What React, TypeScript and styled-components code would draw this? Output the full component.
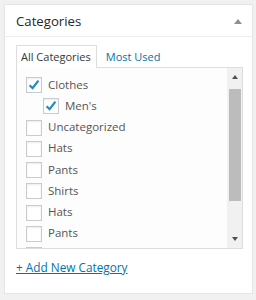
import React from "react";
import styled, { createGlobalStyle } from "styled-components";

const Global = createGlobalStyle`
  html, body { margin: 0; padding: 0; background: #f1f1f1; }
  body { font-family: "Open Sans", "Noto Sans", sans-serif; }
`;

const Panel = styled.div`
  box-sizing: border-box;
  margin: 4px 3px 0 4px;
  width: 249px;
  height: 290px;
  background: #fff;
  border: 1px solid #e5e5e5;
  box-shadow: 0 1px 1px rgba(0, 0, 0, 0.04);
  display: flex;
  flex-direction: column;
`;

const Header = styled.div`
  height: 31px;
  border-bottom: 1px solid #eee;
  display: flex;
  align-items: center;
  justify-content: space-between;
  padding: 0 10px 0 11px;
`;

const Title = styled.h2`
  margin: 0;
  font-size: 13.2px;
  font-weight: 400;
  color: #23282d;
  line-height: 20px;
`;

const Toggle = styled.span`
  width: 0;
  height: 0;
  border-left: 4px solid transparent;
  border-right: 4px solid transparent;
  border-bottom: 5px solid #8c9196;
  margin-top: 1px;
`;

const Inside = styled.div`
  padding: 8px 9px 0 11px;
  display: flex;
  flex-direction: column;
`;

const Tabs = styled.div`
  display: flex;
  align-items: flex-end;
  height: 22px;
`;

const Tab = styled.div<{ $active?: boolean }>`
  box-sizing: border-box;
  height: 23px;
  margin-bottom: -1px;
  padding: 0 5px 0 4px;
  margin-right: 4px;
  font-size: 11px;
  line-height: 21px;
  position: relative;
  z-index: 1;
  color: ${(p) => (p.$active ? "#32373c" : "#0073aa")};
  background: ${(p) => (p.$active ? "#fff" : "transparent")};
  border: 1px solid ${(p) => (p.$active ? "#ddd" : "transparent")};
  border-bottom: none;
  white-space: nowrap;
`;

const Box = styled.div`
  box-sizing: border-box;
  height: 182px;
  border: 1px solid #ddd;
  background: #fdfdfd;
  display: flex;
`;

const List = styled.ul`
  flex: 1;
  list-style: none;
  margin: 0;
  padding: 6px 0 0 9px;
  overflow: hidden;
`;

const Children = styled.ul`
  list-style: none;
  margin: 0;
  padding: 0 0 0 17px;
`;

const Row = styled.li`
  height: 21.25px;
  display: flex;
  align-items: center;
  font-size: 11.5px;
  color: #555;
  white-space: nowrap;
`;

const Check = styled.span<{ $on?: boolean }>`
  box-sizing: border-box;
  width: 16px;
  height: 16px;
  flex: none;
  border: 1px solid #c8ccd0;
  background: #fff;
  box-shadow: inset 0 1px 2px rgba(0, 0, 0, 0.08);
  margin: 1px 6px 0 0;
  display: flex;
  align-items: center;
  justify-content: center;
`;

const Label = styled.span`
  line-height: 18px;
`;

const Scrollbar = styled.div`
  width: 15px;
  flex: none;
  background: #f1f1f1;
  display: flex;
  flex-direction: column;
  align-items: center;
`;

const ScrollButton = styled.div`
  height: 18px;
  width: 15px;
  display: flex;
  align-items: center;
  justify-content: center;
`;

const Arrow = styled.span<{ $down?: boolean }>`
  width: 0;
  height: 0;
  border-left: 3.5px solid transparent;
  border-right: 3.5px solid transparent;
  ${(p) =>
    p.$down
      ? "border-top: 4px solid #505050;"
      : "border-bottom: 4px solid #505050;"}
`;

const Track = styled.div`
  flex: 1;
  width: 15px;
  display: flex;
  justify-content: center;
`;

const Thumb = styled.div`
  width: 12px;
  height: 112px;
  margin-top: 3px;
  background: #bcbcbc;
`;

const AddLink = styled.a`
  margin-top: 9px;
  font-size: 11.8px;
  line-height: 18px;
  color: #0073aa;
  text-decoration: underline;
  align-self: flex-start;
  cursor: pointer;
`;

const Tick = () => (
  <svg width="14" height="14" viewBox="0 0 14 14">
    <path
      d="M2.6 7.2 L5.6 10.2 L11.4 2.6"
      fill="none"
      stroke="#1e8cbe"
      strokeWidth="2.2"
      strokeLinejoin="miter"
    />
  </svg>
);

const Item = ({ label, checked }: { label: string; checked?: boolean }) => (
  <Row>
    <Check $on={checked}>{checked && <Tick />}</Check>
    <Label>{label}</Label>
  </Row>
);

const rest = ["Uncategorized", "Hats", "Pants", "Shirts", "Hats", "Pants", "Shirts"];

export default function App() {
  return (
    <>
      <Global />
      <Panel>
        <Header>
          <Title>Categories</Title>
          <Toggle />
        </Header>
        <Inside>
          <Tabs>
            <Tab $active>All Categories</Tab>
            <Tab>Most Used</Tab>
          </Tabs>
          <Box>
            <List>
              <Item label="Clothes" checked />
              <Children>
                <Item label="Men's" checked />
              </Children>
              {rest.map((r, i) => (
                <Item key={i} label={r} />
              ))}
            </List>
            <Scrollbar>
              <ScrollButton>
                <Arrow />
              </ScrollButton>
              <Track>
                <Thumb />
              </Track>
              <ScrollButton>
                <Arrow $down />
              </ScrollButton>
            </Scrollbar>
          </Box>
          <AddLink>+ Add New Category</AddLink>
        </Inside>
      </Panel>
    </>
  );
}
